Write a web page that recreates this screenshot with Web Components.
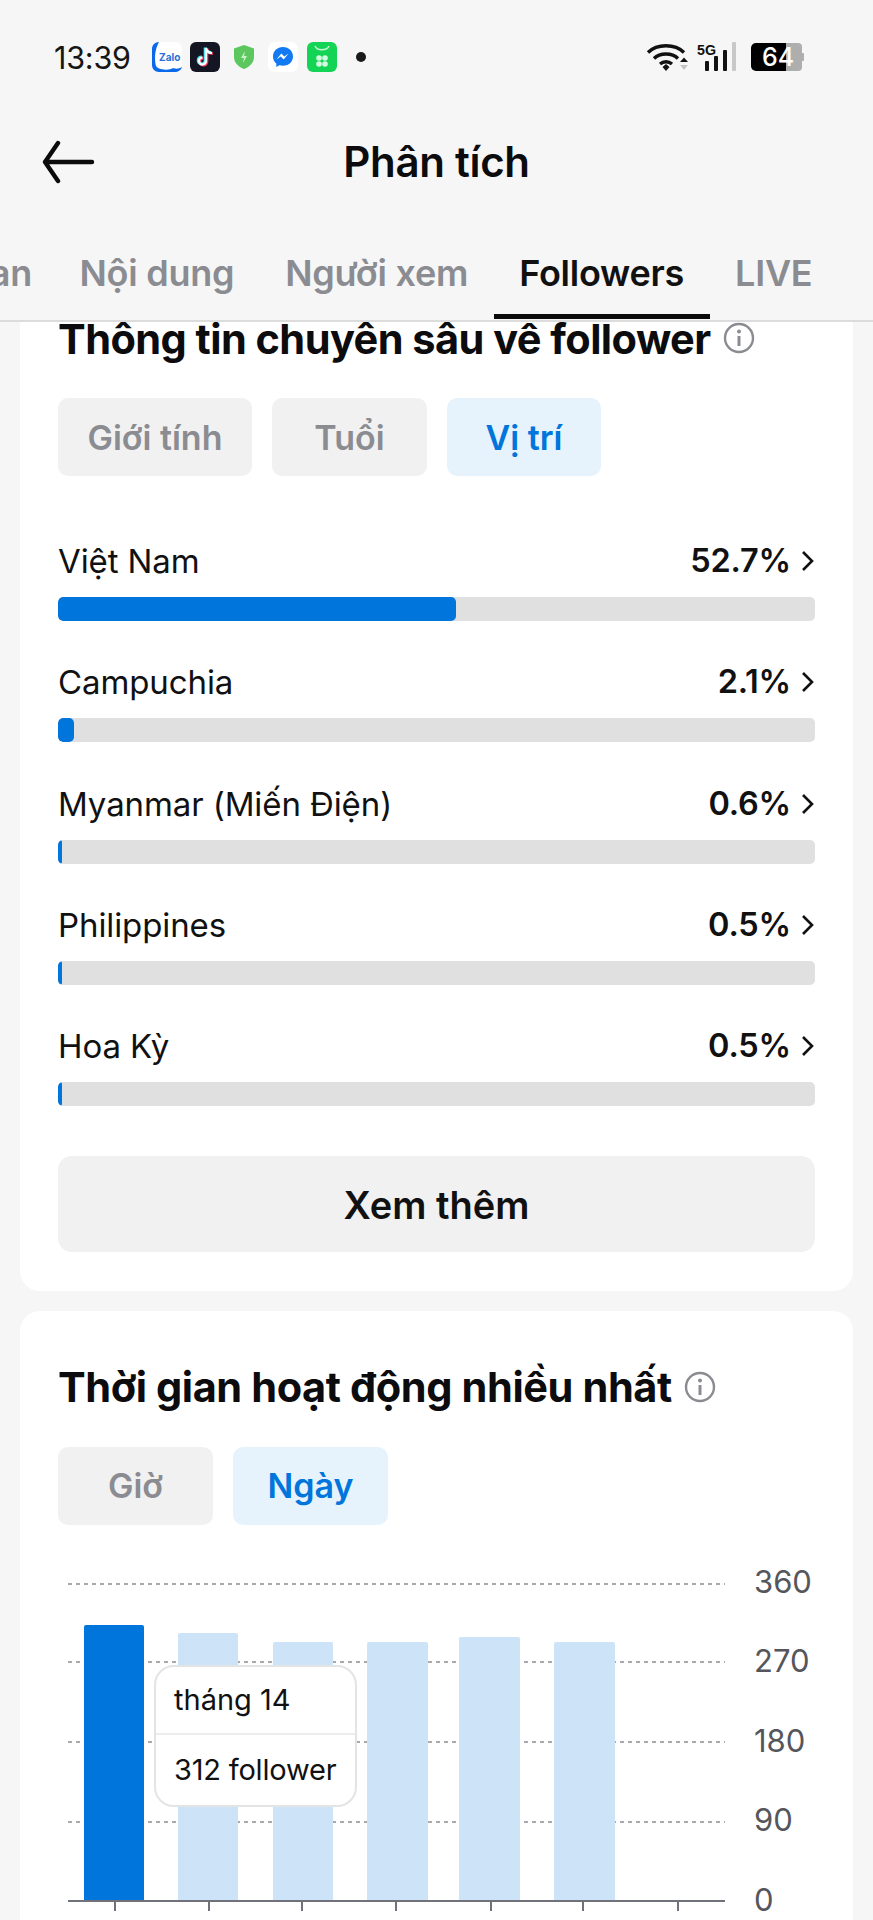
<!DOCTYPE html>
<html lang="vi"><head><meta charset="utf-8"><title>Phân tích</title>
<style>
html,body{margin:0;padding:0;background:#f6f6f6}
body{width:873px;height:1920px;overflow:hidden;font-family:Inter,"Noto Sans",sans-serif;color:#111;display:flex;flex-direction:column}
</style></head><body>
<status-bar></status-bar>
<app-header>Phân tích</app-header>
<tab-bar></tab-bar>
<main-scroll>
  <insight-card heading="Thông tin chuyên sâu về follower" flat>
    <chip-group>
      <filter-chip w="194">Giới tính</filter-chip>
      <filter-chip w="155">Tuổi</filter-chip>
      <filter-chip w="154" active>Vị trí</filter-chip>
    </chip-group>
    <bar-list>
      <progress-row label="Việt Nam" value="52.7%" fill="398"></progress-row>
      <progress-row label="Campuchia" value="2.1%" fill="16"></progress-row>
      <progress-row label="Myanmar (Miến Điện)" value="0.6%" fill="4"></progress-row>
      <progress-row label="Philippines" value="0.5%" fill="4"></progress-row>
      <progress-row label="Hoa Kỳ" value="0.5%" fill="4"></progress-row>
    </bar-list>
    <more-button>Xem thêm</more-button>
  </insight-card>
  <insight-card heading="Thời gian hoạt động nhiều nhất">
    <chip-group>
      <filter-chip w="155">Giờ</filter-chip>
      <filter-chip w="155" active>Ngày</filter-chip>
    </chip-group>
    <activity-chart></activity-chart>
  </insight-card>
</main-scroll>
<script>
function def(name,html){
  customElements.define(name,class extends HTMLElement{
    connectedCallback(){
      if(this.shadowRoot)return;
      const r=this.attachShadow({mode:'open'});
      r.innerHTML=typeof html==='function'?html(this):html;
    }
  });
}
def('status-bar',`<style>
:host{display:flex;align-items:center;height:114px;flex:none;padding:0 69px 0 54px;box-sizing:border-box;font-family:Inter,sans-serif}
.t{font-size:30.500px;color:#161616;width:98px;letter-spacing:-.2px}
svg{display:block;flex:none}
.l,.r{display:flex;align-items:center}
.sp{flex:1}
.zalo{font:700 10px Inter,sans-serif;fill:#2a6fd8}
.n{font:500 25px Inter,sans-serif;fill:#fff}
.g{font:800 15px "Liberation Sans",sans-serif;fill:#111}
</style>
<span class="t">13:39</span>
<div class="l">
<svg width="30" height="30" viewBox="0 0 30 30" style="margin-right:8px"><rect width="30" height="30" rx="7" fill="#fff"/><path d="M7 0C3 0 0 3 0 7v16c0 4 3 7 7 7h16c3 0 6-1.500 7-5-3 2-6 2-9 1-2 1.500-6 2-9 1.500C7 27 4 26 3.500 22 2.500 15 3 7 7 0z" fill="#0a68ea"/><text x="7" y="19" class="zalo">Zalo</text></svg>
<svg width="30" height="30" viewBox="0 0 30 30" style="margin-right:13px"><rect width="30" height="30" rx="6" fill="#141623"/><path d="M16 6v13a3.500 3.500 0 1 1-3.500-3.500M16 6c.5 3 2.500 5 6 5" fill="none" stroke="#ff3b5c" stroke-width="3" transform="translate(.8 .6)"/><path d="M16 6v13a3.500 3.500 0 1 1-3.500-3.500M16 6c.5 3 2.500 5 6 5" fill="none" stroke="#4de8f4" stroke-width="3" transform="translate(-.8 -.6)"/><path d="M16 6v13a3.500 3.500 0 1 1-3.500-3.500M16 6c.5 3 2.500 5 6 5" fill="none" stroke="#fff" stroke-width="2.200"/></svg>
<svg width="22" height="24" viewBox="0 0 22 24" style="margin-right:13px"><path d="M11 0l10 3.500V12c0 6-5 10-10 12C6 22 1 18 1 12V3.500z" fill="#5cc75f"/><path d="M12 6l-4 7h3l-1 5 4-7h-3z" fill="#c9f3c4"/></svg>
<svg width="30" height="30" viewBox="0 0 30 30" style="margin-right:9px"><rect width="30" height="30" rx="7" fill="#fff"/><path d="M15 5C9 5 5 9.300 5 14.500c0 3 1.200 5.400 3.300 7V25l3.100-1.700c1.100.3 2.300.5 3.600.5 6 0 10-4.200 10-9.300S21 5 15 5z" fill="#1279f2"/><path d="M8.500 17.500l4.800-6 3 3 4.200-3-4.800 6-3-3z" fill="#fff"/></svg>
<svg width="30" height="30" viewBox="0 0 30 30" style="margin-right:19px"><rect width="30" height="30" rx="6" fill="#14d455"/><path d="M8 4c2 5 12 5 14 0" fill="none" stroke="#c9f7d6" stroke-width="1.500"/><g fill="#d4fbdf"><circle cx="12" cy="16" r="2.800"/><circle cx="18" cy="16" r="2.800"/><circle cx="12" cy="22" r="2.800"/><circle cx="18" cy="22" r="2.800"/></g></svg>
<svg width="10" height="10" viewBox="0 0 10 10"><circle cx="5" cy="5" r="5" fill="#1a1a1a"/></svg>
</div>
<span class="sp"></span>
<div class="r">
<svg width="42" height="30" viewBox="0 0 42 30" style="margin-right:9px"><g fill="none" stroke="#111" stroke-width="3.400"><path d="M2 10.500C11 1.500 29 1.500 38 10.500"/><path d="M8 16.500c6-6 18-6 24 0"/><path d="M14 22c3.500-3 8.500-3 12 0"/></g><path d="M16.500 25l3.500-3 3.500 3-3.500 4z" fill="#111"/><path d="M34 20l4-4.500 4 4.500z" fill="#111"/><path d="M34 23l4 5 4-5z" fill="#c4c4c4"/></svg>
<svg width="39" height="30" viewBox="0 0 39 30" style="margin-right:15px"><text x="0" y="13" class="g" textLength="19" lengthAdjust="spacingAndGlyphs">5G</text><g fill="#111"><rect x="8" y="19" width="4" height="10" rx="1"/><rect x="17" y="14" width="4" height="15" rx="1"/><rect x="26" y="8" width="4" height="21" rx="1"/></g><rect x="35" y="0" width="4" height="29" rx="1" fill="#c8c8c8"/></svg>
<svg width="53" height="28" viewBox="0 0 53 28"><path d="M35 0h12a4 4 0 0 1 4 4v20a4 4 0 0 1-4 4H35z" fill="#aeaeae"/><path d="M51 10h1a1 1 0 0 1 1 1v6a1 1 0 0 1-1 1h-1z" fill="#aeaeae"/><path d="M5 0h30v28H5a5 5 0 0 1-5-5V5a5 5 0 0 1 5-5z" fill="#000"/><text x="11" y="23" class="n">64</text></svg>
</div>`);
def('app-header',`<style>
:host{display:flex;align-items:center;justify-content:center;height:96px;flex:none;position:relative;box-sizing:border-box}
h1{margin:0;font:600 42px/48px Inter,sans-serif;color:#0c0c0e;letter-spacing:-.3px}
svg{position:absolute;left:41px;top:26px}
</style>
<svg width="54" height="44" viewBox="0 0 54 44"><path d="M17 3L4 22l13 19M4 22h47" fill="none" stroke="#0b0b0b" stroke-width="4.400" stroke-linecap="round" stroke-linejoin="round"/></svg>
<h1><slot></slot></h1>`);
def('tab-bar',`<style>
:host{display:block;height:112px;flex:none;overflow:hidden;border-bottom:2px solid #dcdcdc;box-sizing:border-box}
.in{display:flex;height:110px;margin-left:-175px;width:1200px;box-sizing:border-box}
.t{font:600 36px/40px Inter,sans-serif;color:#8b8c91;padding:43px 25.500px 0;box-sizing:border-box;white-space:nowrap;height:109px;flex:none;letter-spacing:-.25px}
.t:first-child{padding-right:22px}
.a{color:#111;border-bottom:5px solid #0a0a0a}
</style><div class="in"><span class="t">Tổng quan</span><span class="t">Nội dung</span><span class="t">Người xem</span><span class="t a">Followers</span><span class="t">LIVE</span></div>`);
def('main-scroll',`<style>
:host{display:flex;flex-direction:column;gap:20px;flex:1;min-height:0;overflow:hidden;padding:0 20px;box-sizing:border-box}
</style><slot></slot>`);
def('info-icon',`<style>:host{display:inline-flex;flex:none}</style><svg width="32" height="32" viewBox="0 0 32 32"><circle cx="16" cy="16" r="14" fill="none" stroke="#8b8c91" stroke-width="2.400"/><circle cx="16" cy="9.500" r="2" fill="#8b8c91"/><path d="M16 14v10" stroke="#8b8c91" stroke-width="3"/></svg>`);
def('insight-card',h=>`<style>
:host{display:block;background:#fff;border-radius:20px;padding:40px 38px 39px;flex:none;box-sizing:border-box}
:host([flat]){border-radius:0 0 20px 20px;padding-top:0}
.h{display:flex;align-items:center;gap:12px;height:32px;margin-bottom:44px}
:host(:not([flat])) .h{height:72px;margin-bottom:24px}
:host([flat]) h2{letter-spacing:-.55px;position:relative;top:1px}
h2{margin:0;font:700 41.500px/34px Inter,sans-serif;color:#0c0c0e;white-space:nowrap;letter-spacing:-.4px}
</style><div class="h"><h2>${h.getAttribute('heading')}</h2><info-icon></info-icon></div><slot></slot>`);
def('chip-group',`<style>:host{display:flex;gap:20px}</style><slot></slot>`);
def('filter-chip',h=>`<style>
:host{display:flex;align-items:center;justify-content:center;height:78px;width:${h.getAttribute('w')}px;border-radius:10px;background:#f1f1f2;color:#8b8c91;font:600 34px Inter,sans-serif;box-sizing:border-box}
:host([active]){background:#e6f3fc;color:#0075db}
</style><slot></slot>`);
def('bar-list',`<style>:host{display:flex;flex-direction:column;gap:41.300px;margin-top:65px}</style><slot></slot>`);
def('progress-row',h=>`<style>
:host{display:block}
.top{display:flex;align-items:center;height:40px;margin-bottom:16px;font:400 33px/40px Inter,sans-serif;color:#111}
.l{flex:1;letter-spacing:-.1px}
.v{font-weight:600;letter-spacing:-.2px;font-size:32.500px}
svg{margin-left:9px;display:block}
.tr{height:24px;background:#e0e0e0;border-radius:5px;overflow:hidden}
.f{height:100%;background:#0075db;border-radius:5px;width:${h.getAttribute('fill')}px}
</style><div class="top"><span class="l">${h.getAttribute('label')}</span><span class="v">${h.getAttribute('value')}</span><svg width="15" height="24" viewBox="0 0 15 24"><path d="M3 3l9 9-9 9" fill="none" stroke="#111" stroke-width="2.600"/></svg></div><div class="tr"><div class="f"></div></div>`);
def('more-button',`<style>
:host{display:flex;align-items:center;justify-content:center;height:96px;margin-top:49.800px;border-radius:14px;background:#f1f1f2;font:600 38px Inter,sans-serif;color:#111;padding-top:3px;box-sizing:border-box}
</style><slot></slot>`);
def('activity-chart',()=>{
 const bars=[[84,60,1625,'#0075db'],[178,60,1633,'#cce3f8'],[273,60,1642,'#cce3f8'],[367,61,1642,'#cce3f8'],[459,61,1637,'#cce3f8'],[554,61,1642,'#cce3f8']];
 const oy=1561, ox=58;
 const grid=[1584,1662,1742,1822].map(y=>`<path d="M10 ${y-oy}H667" stroke="#8d8d92" stroke-width="1.500" stroke-dasharray="4 4"/>`).join('');
 const b=bars.map(([x,w,t,c])=>`<path d="M${x-ox} ${1901-oy}V${t-oy+2}a2 2 0 0 1 2-2H${x-ox+w-2}a2 2 0 0 1 2 2V${1901-oy}z" fill="${c}"/>`).join('');
 const ticks=[115,209,302,396,491,583,678].map(x=>`<path d="M${x-ox} ${1901-oy}v10" stroke="#70727a" stroke-width="2"/>`).join('');
 return `<style>
:host{display:block;position:relative;height:360px;margin:36px -38px 0 0;flex:none}
svg{display:block;position:absolute;left:0;top:0}
.y{position:absolute;left:696px;top:-1px;height:362px;display:flex;flex-direction:column;justify-content:space-between;font:400 31px/44px Inter,sans-serif;color:#55565c}
.y span{height:44px}
.tip{position:absolute;left:96px;top:104px;width:203px;height:142px;background:#fff;border:2px solid #e4e4e6;border-radius:20px;box-sizing:border-box;font:400 29px/34px Inter,sans-serif;color:#111;display:flex;flex-direction:column}
.tip div{flex:1;display:flex;align-items:center;padding:0 0 0 18px;white-space:nowrap;letter-spacing:-.2px}
.tip div:first-child{border-bottom:2px solid #ececee;flex:none;height:66px;letter-spacing:0}
</style>
<svg width="720" height="360" viewBox="0 0 720 360">${grid}${b}<path d="M10 340H667" stroke="#70727a" stroke-width="2"/>${ticks}</svg>
<div class="y"><span>360</span><span>270</span><span>180</span><span>90</span><span>0</span></div>
<div class="tip"><div>tháng 14</div><div>312 follower</div></div>`;
});
</script>
</body></html>
